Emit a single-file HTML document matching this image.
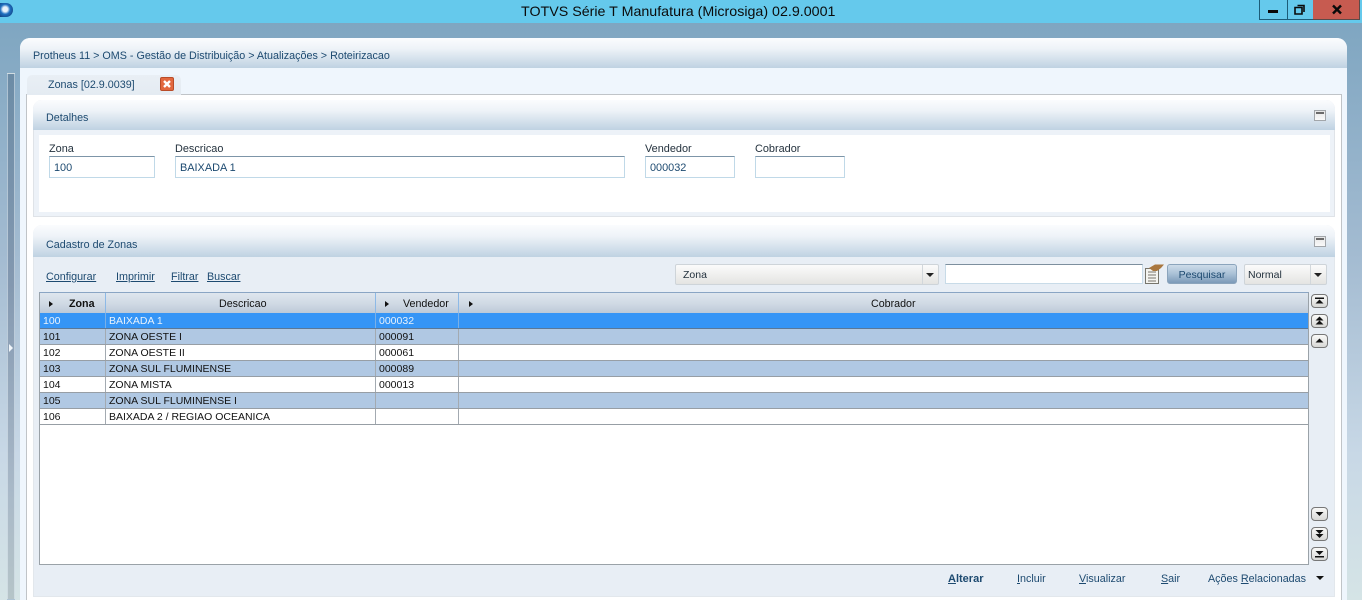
<!DOCTYPE html>
<html><head><meta charset="utf-8"><style>
*{box-sizing:border-box}
html,body{margin:0;padding:0;width:1362px;height:600px;overflow:hidden;background:#a9bfd0;font-family:"Liberation Sans",Arial,sans-serif;font-size:10.5px}
.a{position:absolute}
.t{position:absolute;white-space:nowrap;line-height:14px;color:#1d4a70;font-size:10.75px;margin-top:1px}
.l{position:absolute;white-space:nowrap;line-height:14px;color:#24323e;font-size:10.9px;margin-top:1px}
.u{text-decoration:underline}
.inp{position:absolute;background:#fff;border:1px solid #c0d9e8;border-top:1px solid #7d95a8;height:22px;line-height:22px;padding-left:4px;color:#1d4a70;font-size:10.9px}
.hd{position:absolute;background:linear-gradient(#fbfcfe 0%,#eef3f8 35%,#bfd2e2 100%);border-radius:9px 9px 0 0}
.mn{position:absolute;width:12px;height:11px;border:1px solid #a2a6aa;background:linear-gradient(#e6e6e6,#fafafa)}
.mn:before{content:"";position:absolute;left:1px;right:1px;top:1px;height:2px;background:#6a6a6a}
.row{position:absolute;left:40px;width:1268px;height:16px;border-bottom:1px solid #979ea5;color:#111;line-height:14px}
.row span{position:absolute;top:1px;white-space:nowrap}
.row i{position:absolute;top:0;bottom:0;width:1px;background:#a3aab1}
.c1{left:3px}.c2{left:69px}.c3{left:339px}
.w{background:#fff}.b{background:#b0c8e3}
.tri{position:absolute;width:0;height:0;border-top:3.5px solid transparent;border-bottom:3.5px solid transparent;border-left:4px solid #111}
.sb{position:absolute;left:1311px;width:17px;height:14px}
.cmb{position:absolute;height:21px;border:1px solid #ced4d9;border-radius:2px;background:linear-gradient(#fbfbfb,#e4e4e2);color:#24323e;line-height:20px;padding-left:7px}
.cmb b{position:absolute;right:0;top:0;bottom:0;width:16px;border-left:1px solid #d2d7db}
.cmb b:after{content:"";position:absolute;left:3px;top:8px;border-left:4px solid transparent;border-right:4px solid transparent;border-top:4px solid #222}
</style></head><body>
<!-- window bar -->
<div class="a" style="left:0;top:0;width:1362px;height:23px;background:#65c9ec"></div>
<div class="a" style="left:0;top:23px;width:1362px;height:577px;background:linear-gradient(#7fa6c1 0%,#a3bbd1 40%,#c8d8e6 75%,#d5e4e6 100%)"></div>
<div class="a" style="left:0;top:3px;width:13px;height:14px;border-radius:0 7px 7px 0;background:radial-gradient(circle at 40% 45%,#e8f2fb 0 22%,#1f6fc0 45%,#0b2f66 100%)"></div>
<div class="a" style="left:521px;top:1px;height:23px;line-height:23px;white-space:nowrap;font-size:14.25px;color:#0b0b0b">TOTVS Série T Manufatura (Microsiga) 02.9.0001</div>
<div class="a" style="left:1259px;top:0;width:67px;height:20px;border:1px solid #1c5c78;border-top:0"></div>
<div class="a" style="left:1287px;top:0;width:1px;height:20px;background:#1c5c78"></div>
<div class="a" style="left:1313px;top:0;width:47px;height:20px;background:#c75b50;border-bottom:1px solid #5a4a48;border-right:1px solid #5a4a48"></div>
<div class="a" style="left:1268px;top:10px;width:10px;height:3px;background:#0a0a0a"></div>
<svg class="a" style="left:1294px;top:4px" width="12" height="11"><path d="M3.500 1.500h6.500v6.500M1 3.500h7v6.500h-7z" fill="none" stroke="#0a0a0a" stroke-width="1.6"/></svg>
<svg class="a" style="left:1331px;top:4px" width="12" height="11"><path d="M2 1.500l8 8M10 1.500l-8 8" stroke="#0a0a0a" stroke-width="2.4"/></svg>
<!-- left strip -->
<div class="a" style="left:7px;top:73px;width:8px;height:527px;border:1px solid rgba(230,240,248,.55);background:linear-gradient(#6c8ca6,#8398b0 40%,#a9b9c8 80%,#b5c4c8)"></div>
<svg class="a" style="left:8px;top:343px" width="6" height="10"><path d="M1 1l4 4-4 4z" fill="#f1f6fa"/></svg>
<!-- main panel -->
<div class="a" style="left:20px;top:38px;width:1327px;height:562px;background:#eff6fd;border-radius:10px 10px 0 0"></div>
<div class="hd" style="left:20px;top:38px;width:1327px;height:30px;border-radius:10px 10px 0 0"></div>
<div class="t" style="left:33px;top:48px">Protheus 11 &gt; OMS - Gestão de Distribuição &gt; Atualizações &gt; Roteirizacao</div>
<!-- tab + content frame -->
<div class="a" style="left:26px;top:94px;width:1316px;height:506px;background:#fff;border:1px solid #c0c4c8;border-bottom:0"></div>
<div class="a" style="left:27px;top:75px;width:154px;height:20px;background:linear-gradient(#e9eff5,#e4ebf2);border-radius:5px 5px 0 0"></div>
<div class="t" style="left:48px;top:77px">Zonas [02.9.0039]</div>
<div class="a" style="left:160px;top:77px;width:14px;height:14px;background:#e2683f;border:1px solid #b94c28;border-radius:2px"></div>
<svg class="a" style="left:160px;top:77px" width="14" height="14"><path d="M4 4l6 6M10 4l-6 6" stroke="#fff" stroke-width="2.4"/></svg>
<!-- Detalhes -->
<div class="a" style="left:33px;top:100px;width:1302px;height:117px;background:#edf2f8;border:1px solid #dfe3e8;border-radius:9px 9px 0 0"></div>
<div class="hd" style="left:33px;top:100px;width:1302px;height:30px"></div>
<div class="a" style="left:39px;top:135px;width:1291px;height:77px;background:#fff"></div>
<div class="t" style="left:46px;top:110px">Detalhes</div>
<div class="mn" style="left:1314px;top:110px"></div>
<div class="l" style="left:49px;top:141px">Zona</div>
<div class="l" style="left:175px;top:141px">Descricao</div>
<div class="l" style="left:645px;top:141px">Vendedor</div>
<div class="l" style="left:755px;top:141px">Cobrador</div>
<div class="inp" style="left:49px;top:156px;width:106px">100</div>
<div class="inp" style="left:175px;top:156px;width:450px">BAIXADA 1</div>
<div class="inp" style="left:645px;top:156px;width:90px">000032</div>
<div class="inp" style="left:755px;top:156px;width:90px"></div>
<!-- Cadastro -->
<div class="a" style="left:33px;top:225px;width:1302px;height:372px;background:#e8eef5;border:1px solid #e2e7ec;border-radius:9px 9px 0 0"></div>
<div class="hd" style="left:33px;top:225px;width:1302px;height:32px"></div>
<div class="t" style="left:46px;top:237px">Cadastro de Zonas</div>
<div class="mn" style="left:1314px;top:236px"></div>
<div class="t u" style="left:46px;top:269px">Configurar</div>
<div class="t u" style="left:116px;top:269px">Imprimir</div>
<div class="t u" style="left:171px;top:269px">Filtrar</div>
<div class="t u" style="left:207px;top:269px">Buscar</div>
<div class="cmb" style="left:675px;top:264px;width:264px">Zona<b></b></div>
<div class="a" style="left:945px;top:264px;width:198px;height:20px;background:#fff;border:1px solid #c8dbe8;border-top:1px solid #7d8f9e"></div>
<svg class="a" style="left:1144px;top:263px" width="22" height="22"><path d="M1.500 5.500h13v15h-13z" fill="#f4f4f0" stroke="#77756c"/><path d="M4 9h8M4 12h8M4 15h8M4 18h8" stroke="#77756c"/><path d="M5 5l6-3.500h9l-3 3.500-4 3h-4z" fill="#a9773f"/></svg>
<div class="a" style="left:1167px;top:264px;width:70px;height:20px;border:1px solid #8ba4bc;border-radius:3px;background:linear-gradient(#cddbe9,#a9c0d6 50%,#7c9ab8);color:#1d4a70;text-align:center;line-height:20px">Pesquisar</div>
<div class="cmb" style="left:1244px;top:264px;width:83px;padding-left:3px">Normal<b></b></div>
<!-- grid -->
<div class="a" style="left:39px;top:292px;width:1270px;height:273px;background:#fff;border:1px solid #9aa2a8;border-top:1px solid #8aa5c4"></div>
<div class="a" style="left:40px;top:293px;width:1268px;height:20px;background:linear-gradient(#dfe6ee,#cfd9e4 55%,#bcc9d8);color:#111;line-height:21px;font-size:10.7px">
<div class="a" style="left:65px;top:0;width:1px;height:20px;background:#8db9e6"></div>
<div class="a" style="left:335px;top:0;width:1px;height:20px;background:#8db9e6"></div>
<div class="a" style="left:418px;top:0;width:1px;height:20px;background:#8db9e6"></div>
<div class="tri" style="left:9px;top:8px"></div><div class="tri" style="left:345px;top:8px"></div><div class="tri" style="left:429px;top:8px"></div>
<b class="a" style="left:29px;top:1px;font-weight:bold">Zona</b>
<span class="a" style="left:179px;top:1px">Descricao</span>
<span class="a" style="left:363px;top:1px">Vendedor</span>
<span class="a" style="left:831px;top:1px">Cobrador</span>
</div>
<div class="row" style="top:313px;background:#3595f6;color:#e8f2fc;border-bottom-color:#5a7898"><i style="left:65px;background:#7ab0e8"></i><i style="left:335px;background:#7ab0e8"></i><i style="left:418px;background:#7ab0e8"></i><span class="c1">100</span><span class="c2">BAIXADA 1</span><span class="c3">000032</span></div>
<div class="row b" style="top:329px"><i style="left:65px"></i><i style="left:335px"></i><i style="left:418px"></i><span class="c1">101</span><span class="c2">ZONA OESTE I</span><span class="c3">000091</span></div>
<div class="row w" style="top:345px"><i style="left:65px"></i><i style="left:335px"></i><i style="left:418px"></i><span class="c1">102</span><span class="c2">ZONA OESTE II</span><span class="c3">000061</span></div>
<div class="row b" style="top:361px"><i style="left:65px"></i><i style="left:335px"></i><i style="left:418px"></i><span class="c1">103</span><span class="c2">ZONA SUL FLUMINENSE</span><span class="c3">000089</span></div>
<div class="row w" style="top:377px"><i style="left:65px"></i><i style="left:335px"></i><i style="left:418px"></i><span class="c1">104</span><span class="c2">ZONA MISTA</span><span class="c3">000013</span></div>
<div class="row b" style="top:393px"><i style="left:65px"></i><i style="left:335px"></i><i style="left:418px"></i><span class="c1">105</span><span class="c2">ZONA SUL FLUMINENSE I</span></div>
<div class="row w" style="top:409px"><i style="left:65px"></i><i style="left:335px"></i><i style="left:418px"></i><span class="c1">106</span><span class="c2">BAIXADA 2 / REGIAO OCEANICA</span></div>
<!-- scroll buttons -->
<svg class="sb" style="top:294px" viewBox="0 0 17 14"><defs><linearGradient id="g" x1="0" y1="0" x2="0" y2="1"><stop offset="0" stop-color="#fbfbfa"/><stop offset="1" stop-color="#d6d6d4"/></linearGradient></defs><rect x=".5" y=".5" width="16" height="13" rx="3.500" fill="url(#g)" stroke="#777"/><path d="M4 3.500h9v1.500h-9zM8.500 5.500l4 4h-8z" fill="#111"/></svg>
<svg class="sb" style="top:314px" viewBox="0 0 17 14"><rect x=".5" y=".5" width="16" height="13" rx="3.500" fill="url(#g)" stroke="#777"/><path d="M8.500 2.500l4 4h-8zM8.500 6.500l4 4h-8z" fill="#111"/></svg>
<svg class="sb" style="top:334px" viewBox="0 0 17 14"><rect x=".5" y=".5" width="16" height="13" rx="3.500" fill="url(#g)" stroke="#777"/><path d="M8.500 4.500l4 4h-8z" fill="#111"/></svg>
<svg class="sb" style="top:507px" viewBox="0 0 17 14"><rect x=".5" y=".5" width="16" height="13" rx="3.500" fill="url(#g)" stroke="#777"/><path d="M8.500 9l4-4h-8z" fill="#111"/></svg>
<svg class="sb" style="top:527px" viewBox="0 0 17 14"><rect x=".5" y=".5" width="16" height="13" rx="3.500" fill="url(#g)" stroke="#777"/><path d="M8.500 7l4-4h-8zM8.500 11l4-4h-8z" fill="#111"/></svg>
<svg class="sb" style="top:547px" viewBox="0 0 17 14"><rect x=".5" y=".5" width="16" height="13" rx="3.500" fill="url(#g)" stroke="#777"/><path d="M8.500 8l4-4h-8zM4 9h9v1.500h-9z" fill="#111"/></svg>
<!-- footer actions -->
<div class="t" style="left:948px;top:571px;font-weight:bold;font-size:11px"><span class="u">A</span>lterar</div>
<div class="t" style="left:1017px;top:571px"><span class="u">I</span>ncluir</div>
<div class="t" style="left:1079px;top:571px"><span class="u">V</span>isualizar</div>
<div class="t" style="left:1161px;top:571px"><span class="u">S</span>air</div>
<div class="t" style="left:1208px;top:571px">Ações <span class="u">R</span>elacionadas</div>
<div class="a" style="left:1316px;top:576px;border-left:4px solid transparent;border-right:4px solid transparent;border-top:4px solid #111"></div>
</body></html>
